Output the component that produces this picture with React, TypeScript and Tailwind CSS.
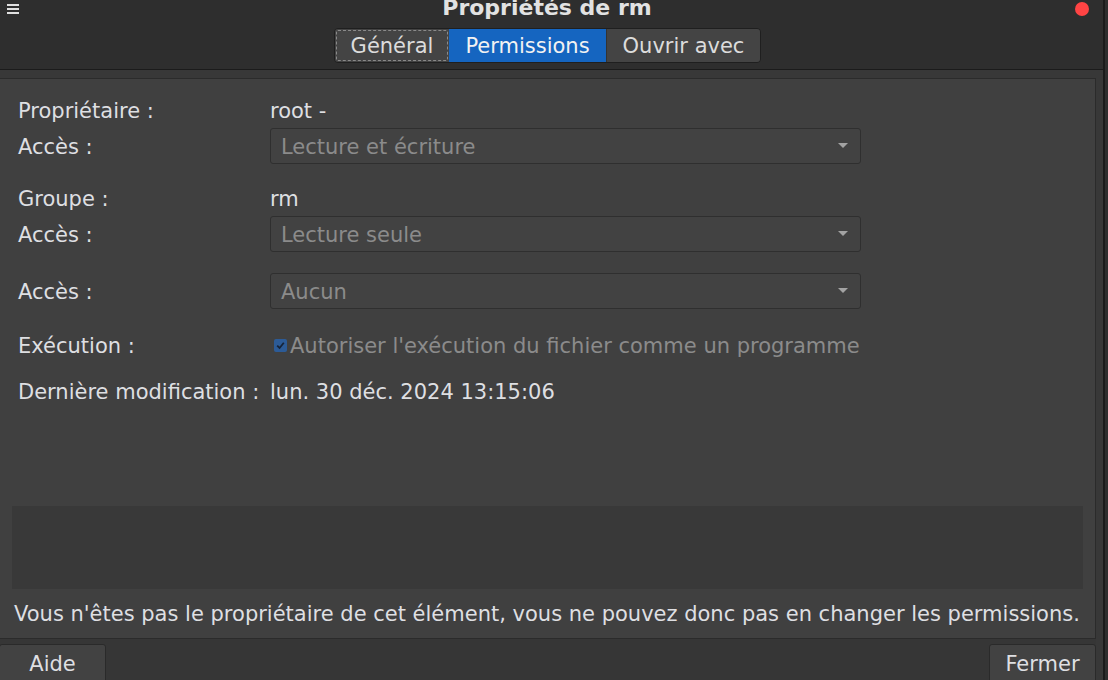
const FONT = "font-['DejaVu_Sans',_'Liberation_Sans',_sans-serif]";

function Combo({ value }: { value: string }) {
  return (
    <div className="flex h-[36px] w-[591px] items-center justify-between rounded-[3px] border border-[#2f2f2f] bg-[#424242] pl-[10px] pr-[12px]">
      <span className="pt-[2px] text-[#8b8b8b]">{value}</span>
      <svg width="10" height="6" viewBox="0 0 10 6">
        <path d="M0 0 H10 L5 5 Z" fill="#a3a3a3" />
      </svg>
    </div>
  );
}

function Row({
  label,
  className,
  children,
}: {
  label: string;
  className: string;
  children: React.ReactNode;
}) {
  return (
    <div className={`flex items-center ${className}`}>
      <div className="w-[252px] shrink-0 pt-[2px]">{label}</div>
      {children}
    </div>
  );
}

export default function App() {
  return (
    <div
      className={`flex h-[680px] w-[1108px] overflow-hidden bg-[#2e2e2e] text-[21px] leading-[24px] text-[#dedfe2] ${FONT}`}
    >
      <div className="flex w-[1105px] shrink-0 flex-col border-r-2 border-[#1b1b1b] bg-[#383838]">
        {/* header bar */}
        <header className="h-[70px] shrink-0 overflow-hidden border-b border-[#1b1b1b] bg-[#2e2e2e]">
          <div className="flex h-[28px] items-start">
            <div className="ml-[7px] mt-[4px] flex w-[12px] flex-col gap-[2px]">
              <span className="h-[2px] bg-[#e0e0e0]" />
              <span className="h-[2px] bg-[#e0e0e0]" />
              <span className="h-[2px] bg-[#e0e0e0]" />
            </div>
            <div className="-mt-[2px] flex-1 text-center text-[22px] font-bold leading-[20px] text-[#e2e2e2]">
              Propriétés de rm
            </div>
            <span className="mr-[14px] mt-[2px] h-[14px] w-[14px] rounded-full bg-[#ff4444]" />
          </div>
          <div className="flex justify-center pr-[8px]">
            <div className="flex h-[35px] overflow-hidden rounded-[4px] border border-[#1f1f1f]">
              <div className="flex w-[114px] items-center justify-center bg-[#444444] p-[1px]">
                <div className="flex h-full w-full items-center justify-center rounded-[2px] border border-dashed border-[#8a8a8a] text-[#dcdcdc]">
                  Général
                </div>
              </div>
              <div className="flex w-[157px] items-center justify-center bg-[#1565c0] text-[#f2f2f2]">
                Permissions
              </div>
              <div className="flex w-[154px] items-center justify-center border-l border-[#333] bg-[#444444] text-[#dcdcdc]">
                Ouvrir avec
              </div>
            </div>
          </div>
        </header>

        {/* main panel */}
        <div className="flex flex-1 flex-col pr-[7px] pt-[8px]">
          <div className="flex h-[561px] flex-col border-y border-r border-[#2b2b2b] bg-[#404040] pb-[12px]">
            <div className="flex flex-col pl-[18px] pt-[19px]">
              <Row label="Propriétaire :" className="h-[24px]">
                <span className="pt-[2px]">root -</span>
              </Row>
              <Row label="Accès :" className="mt-[6px]">
                <Combo value="Lecture et écriture" />
              </Row>
              <Row label="Groupe :" className="mt-[22px] h-[24px]">
                <span className="pt-[2px]">rm</span>
              </Row>
              <Row label="Accès :" className="mt-[6px]">
                <Combo value="Lecture seule" />
              </Row>
              <Row label="Accès :" className="mt-[21px]">
                <Combo value="Aucun" />
              </Row>
              <Row label="Exécution :" className="mt-[24px] h-[24px]">
                <div className="flex items-center">
                  <span className="ml-[4px] mr-[3px] flex h-[13px] w-[13px] items-center justify-center rounded-[2px] bg-[#2c5b97]">
                    <svg width="9" height="9" viewBox="0 0 9 9">
                      <path d="M1.2 4.6 L3.6 7 L7.8 1.8" fill="none" stroke="#162338" strokeWidth="1.8" />
                    </svg>
                  </span>
                  <span className="pt-[2px] text-[#8b8b8b]">Autoriser l'exécution du fichier comme un programme</span>
                </div>
              </Row>
              <Row label="Dernière modification :" className="mt-[22px] h-[24px]">
                <span className="pt-[2px]">lun. 30 déc. 2024 13:15:06</span>
              </Row>
            </div>

            <div className="mx-[12px] mt-auto h-[83px] bg-[#393939]" />
            <p className="mt-[13px] h-[24px] px-[14px]">
              Vous n'êtes pas le propriétaire de cet élément, vous ne pouvez donc pas en changer les permissions.
            </p>
          </div>

          {/* button bar */}
          <div className="flex h-[42px] shrink-0 items-start justify-between bg-[#363636] pt-[5px]">
            <button className="-ml-[1px] flex h-[40px] w-[107px] items-center justify-center rounded-t-[3px] border border-[#2a2a2a] bg-[#424242] text-[#dedfe2]">
              Aide
            </button>
            <button className="flex h-[40px] w-[107px] items-center justify-center rounded-t-[3px] border border-[#2a2a2a] bg-[#424242] text-[#dedfe2]">
              Fermer
            </button>
          </div>
        </div>
      </div>
      <div className="flex-1 bg-[#2e2e2e]" />
    </div>
  );
}
